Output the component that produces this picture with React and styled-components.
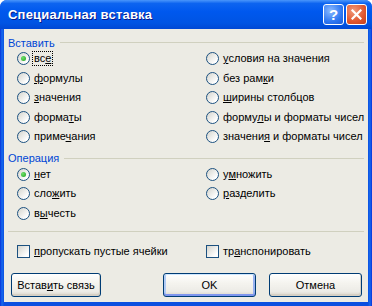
import styled, { createGlobalStyle } from "styled-components"

const Global = createGlobalStyle`
  body {
    margin: 0;
    background: #fff;
  }
`

const Window = styled.div`
  width: 372px;
  height: 306px;
  box-sizing: border-box;
  display: flex;
  flex-direction: column;
  background: linear-gradient(90deg, #0831d9 0, #166aee 2px, #0b4fe0 4px, #0b4fe0 368px, #166aee 370px, #0831d9 372px);
  border-radius: 7px 7px 0 0;
  font-family: "Liberation Sans", Arial, sans-serif;
  font-size: 11px;
  overflow: hidden;
`

const TitleBar = styled.div`
  height: 29px;
  flex: none;
  display: flex;
  align-items: center;
  padding: 0 5px 0 8px;
  box-sizing: border-box;
  background: linear-gradient(#4a96fb 0%, #0d64f0 12%, #0058ee 40%, #0054e3 80%, #0048d4 100%);
`

const Title = styled.div`
  flex: 1;
  color: #fff;
  font-weight: bold;
  font-size: 13px;
  letter-spacing: 0.2px;
  text-shadow: 1px 1px #0a1a8a;
`

const CapButton = styled.div`
  width: 21px;
  height: 21px;
  box-sizing: border-box;
  margin-left: 2px;
  border: 1px solid #fff;
  border-radius: 3px;
  display: flex;
  align-items: center;
  justify-content: center;
  color: #fff;
  font-weight: bold;
  font-size: 15px;
  background: ${(p) =>
    p.$close
      ? "radial-gradient(circle at 35% 30%, #f19a7c, #e0562e 60%, #c2401c)"
      : "radial-gradient(circle at 35% 30%, #8cbaff, #2f78f2 60%, #1a5bd8)"};
`

const Body = styled.div`
  flex: 1;
  margin: 0 4px 4px;
  padding: 7px 4px 0;
  background: #ecebe4;
  display: flex;
  flex-direction: column;
`

const Legend = styled.div`
  height: 13px;
  display: flex;
  align-items: center;
  gap: 5px;
  color: #0046d5;
  margin-top: ${(p) => p.$top || 0}px;

  &::after {
    content: "";
    flex: 1;
    height: 1px;
    background: #d0d0bf;
  }
`

const OptionGrid = styled.div`
  display: grid;
  grid-template-columns: 189px 1fr;
  grid-template-rows: repeat(${(p) => p.$rows}, 19.5px);
  grid-auto-flow: column;
  padding-left: 9px;
`

const Option = styled.div`
  display: flex;
  align-items: center;
  gap: 2px;
  color: #000;
  white-space: nowrap;
`

const Radio = styled.span`
  width: 13px;
  height: 13px;
  flex: none;
  box-sizing: border-box;
  border-radius: 50%;
  border: 1px solid #1c5180;
  background: linear-gradient(135deg, #d4d4cd, #fff 80%);
  display: flex;
  align-items: center;
  justify-content: center;

  &::after {
    content: "";
    display: ${(p) => (p.$checked ? "block" : "none")};
    width: 5px;
    height: 5px;
    border-radius: 50%;
    background: radial-gradient(circle at 35% 35%, #6ee06a, #21a121);
  }
`

const Check = styled.span`
  width: 13px;
  height: 13px;
  flex: none;
  box-sizing: border-box;
  border: 1px solid #1c5180;
  background: linear-gradient(135deg, #d4d4cd, #fff 80%);
`

const Label = styled.span`
  border: 1px dotted ${(p) => (p.$focus ? "#000" : "transparent")};
  padding: 0 1px;
  line-height: 13px;
`

const Separator = styled.div`
  height: 1px;
  margin-top: 8px;
  background: #d0d0bf;
`

const CheckRow = styled.div`
  display: grid;
  grid-template-columns: 189px 1fr;
  height: 20px;
  margin-top: 9px;
  padding-left: 9px;
`

const ButtonRow = styled.div`
  display: flex;
  gap: 13px;
  margin-top: 12px;
  padding: 0 2px 0 3px;
`

const Button = styled.button`
  width: ${(p) => p.$w}px;
  height: 24px;
  box-sizing: border-box;
  padding: 0;
  border: 1px solid #003c74;
  border-radius: 3px;
  background: linear-gradient(#fff 0%, #f5f4ef 40%, #ecebe6 80%, #d8d2c6 100%);
  font: 11px "Liberation Sans", Arial, sans-serif;
  color: #000;
  box-shadow: ${(p) =>
    p.$default
      ? "inset 0 1px 0 #cee7ff, inset 0 -2px 0 #7f96ee, inset 2px 0 0 #b1cbf5, inset -2px 0 0 #98b2f0"
      : "inset -1px -2px 0 #d6d0c5"};

  &:first-child {
    margin-right: auto;
  }
`

const Opt = ({ checked, focus, children }) => (
  <Option>
    <Radio $checked={checked} />
    <Label $focus={focus}>{children}</Label>
  </Option>
)

const CheckOpt = ({ children }) => (
  <Option>
    <Check />
    <Label>{children}</Label>
  </Option>
)

export default function App() {
  return (
    <>
      <Global />
      <Window>
        <TitleBar>
          <Title>Специальная вставка</Title>
          <CapButton>?</CapButton>
          <CapButton $close>
            <svg width="11" height="11" viewBox="0 0 11 11">
              <path d="M1.5 1.5 L9.5 9.5 M9.5 1.5 L1.5 9.5" stroke="#fff" strokeWidth="2.2" strokeLinecap="square" />
            </svg>
          </CapButton>
        </TitleBar>
        <Body>
          <Legend>Вставить</Legend>
          <OptionGrid $rows={5}>
            <Opt checked focus>вс<u>е</u></Opt>
            <Opt><u>ф</u>ормулы</Opt>
            <Opt><u>з</u>начения</Opt>
            <Opt>форма<u>т</u>ы</Opt>
            <Opt>приме<u>ч</u>ания</Opt>
            <Opt><u>у</u>словия на значения</Opt>
            <Opt>без рам<u>к</u>и</Opt>
            <Opt><u>ш</u>ирины столбцов</Opt>
            <Opt>форму<u>л</u>ы и форматы чисел</Opt>
            <Opt>значени<u>я</u> и форматы чисел</Opt>
          </OptionGrid>
          <Legend $top={5}>Операция</Legend>
          <OptionGrid $rows={3}>
            <Opt checked><u>н</u>ет</Opt>
            <Opt>сло<u>ж</u>ить</Opt>
            <Opt>в<u>ы</u>честь</Opt>
            <Opt>у<u>м</u>ножить</Opt>
            <Opt><u>р</u>азделить</Opt>
          </OptionGrid>
          <Separator />
          <CheckRow>
            <CheckOpt><u>п</u>ропускать пустые ячейки</CheckOpt>
            <CheckOpt>тр<u>а</u>нспонировать</CheckOpt>
          </CheckRow>
          <ButtonRow>
            <Button $w={90}>Встав<u>и</u>ть связь</Button>
            <Button $w={93} $default>OK</Button>
            <Button $w={93}>Отмена</Button>
          </ButtonRow>
        </Body>
      </Window>
    </>
  )
}
